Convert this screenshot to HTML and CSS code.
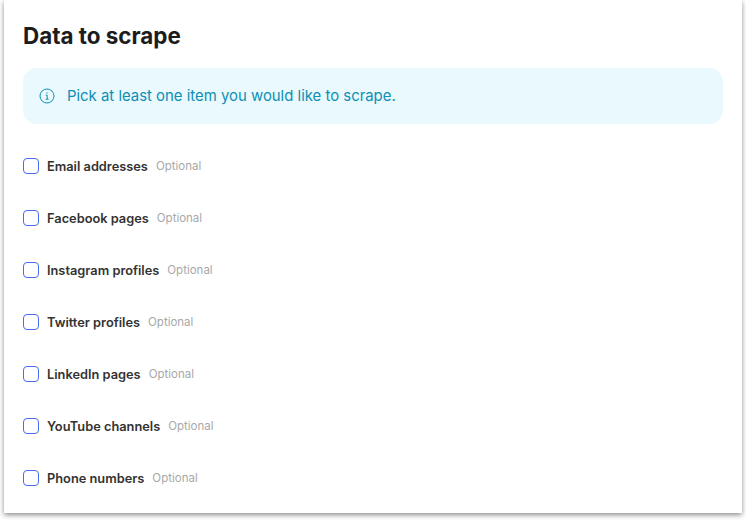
FILE: index.html
```html
<!DOCTYPE html>
<html lang="en">
<head>
    <meta charset="UTF-8">
    <meta name="viewport" content="width=device-width, initial-scale=1.0">
    <title>Data to scrape</title>
    <link rel="stylesheet" href="styles.css">
</head>
<body>
    <div class="card">
        <h1>Data to scrape</h1>

        <div class="notice">
            <svg class="notice-icon" viewBox="0 0 16 16" width="16" height="16" fill="none" stroke="#0e8fb3" stroke-width="1">
                <circle cx="8" cy="8" r="7"/>
                <circle cx="8" cy="4.9" r="0.7" fill="#0e8fb3" stroke="none"/>
                <path d="M6.7 7.2H8.2V11M6.6 11.2H9.6"/>
            </svg>
            <span>Pick at least one item you would like to scrape.</span>
        </div>

        <div class="option-list">
            <label class="option"><input type="checkbox"><b>Email addresses</b><small>Optional</small></label>
            <label class="option"><input type="checkbox"><b>Facebook pages</b><small>Optional</small></label>
            <label class="option"><input type="checkbox"><b>Instagram profiles</b><small>Optional</small></label>
            <label class="option"><input type="checkbox"><b>Twitter profiles</b><small>Optional</small></label>
            <label class="option"><input type="checkbox"><b>LinkedIn pages</b><small>Optional</small></label>
            <label class="option"><input type="checkbox"><b>YouTube channels</b><small>Optional</small></label>
            <label class="option"><input type="checkbox"><b>Phone numbers</b><small>Optional</small></label>
        </div>
    </div>
</body>
</html>
```

FILE: styles.css
```css
html, body {
    height: 100%;
}
body {
    font-family: "Inter", "Open Sans", sans-serif;
    margin: 0;
    padding: 0 4px;
    background-color: #fff;
    overflow: hidden;
}
.card {
    box-sizing: border-box;
    height: 513px;
    padding: 22px 19px 0;
    background: white;
    box-shadow: 0 2px 5px rgba(0,0,0,0.45);
}
h1 {
    margin: 0 0 18px;
    font-size: 22.4px;
    line-height: 28px;
    font-weight: 700;
    color: #1c1c1c;
}
.notice {
    display: flex;
    align-items: center;
    gap: 12px;
    height: 56px;
    padding: 0 16px;
    background-color: #e9f9fe;
    border-radius: 14px;
    font-size: 14.9px;
    color: #0e8fb3;
}
.option-list {
    display: flex;
    flex-direction: column;
    gap: 32px;
    margin-top: 32px;
}
.option {
    display: flex;
    align-items: center;
    height: 20px;
}
.option input {
    appearance: none;
    box-sizing: border-box;
    width: 16px;
    height: 16px;
    margin: 0 8px 0 0;
    border: 1px solid #4a6cf0;
    border-radius: 4px;
    background: white;
}
.option b {
    font-size: 12.8px;
    font-weight: 600;
    color: #333;
}
.option small {
    margin-left: 8px;
    font-size: 11.5px;
    color: #a8a8a8;
}
```
